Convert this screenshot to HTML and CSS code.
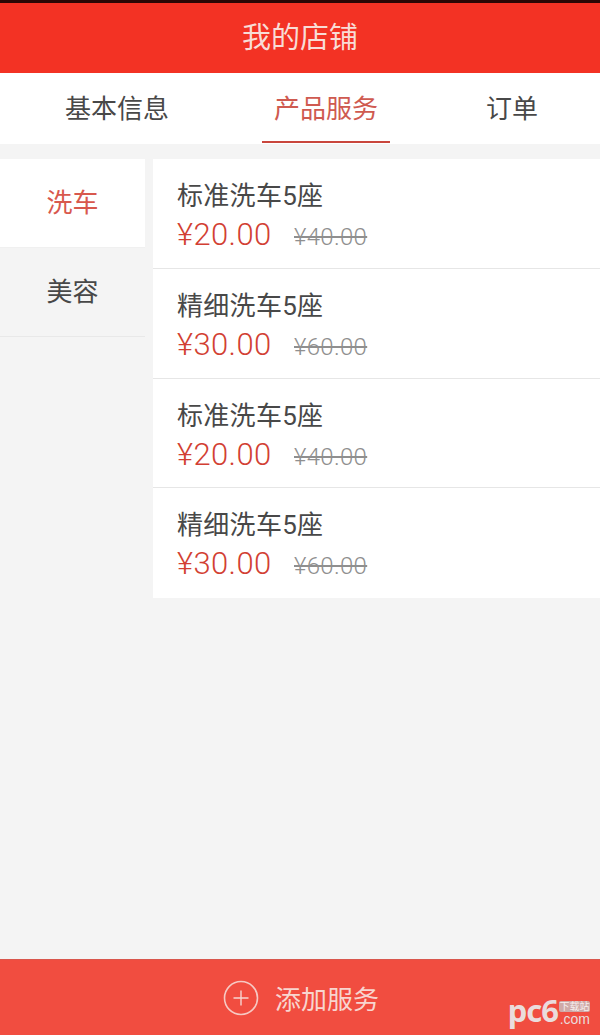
FILE: index.html
```html
<!DOCTYPE html>
<html>
  <head>
    <meta charset="utf-8">
    <link rel="stylesheet" href="styles.css">
  </head>

  <body>
    <div class="statusbar"></div>
    <div class="header">我的店铺</div>

    <div class="tabs">
      <div class="tab tab-info">基本信息</div>
      <div class="tab tab-service active">产品服务</div>
      <div class="tab tab-order">订单</div>
    </div>

    <div class="content">
      <div class="side">
        <div class="side-item active">洗车</div>
        <div class="side-item">美容</div>
      </div>

      <div class="list">
        <div class="item">
          <div class="name">标准洗车5座</div>
          <div class="prices"><span class="price">¥20.00</span><span class="old">¥40.00</span></div>
        </div>
        <div class="item">
          <div class="name">精细洗车5座</div>
          <div class="prices"><span class="price">¥30.00</span><span class="old">¥60.00</span></div>
        </div>
        <div class="item">
          <div class="name">标准洗车5座</div>
          <div class="prices"><span class="price">¥20.00</span><span class="old">¥40.00</span></div>
        </div>
        <div class="item">
          <div class="name">精细洗车5座</div>
          <div class="prices"><span class="price">¥30.00</span><span class="old">¥60.00</span></div>
        </div>
      </div>
    </div>

    <div class="footer">
      <svg class="plus" width="36" height="36" viewBox="0 0 36 36">
        <circle cx="18" cy="18" r="16.5" fill="none" stroke="#f6c9c3" stroke-width="1.6"/>
        <path d="M18 10.5V25.5M10.5 18H25.5" fill="none" stroke="#f6d5d0" stroke-width="1.4"/>
      </svg>
      <span class="add-text">添加服务</span>
      <div class="watermark">
        <span class="wm-logo">pc6</span>
        <span class="wm-side">
          <span class="wm-tag">下载站</span>
          <span class="wm-com">.com</span>
        </span>
      </div>
    </div>
  </body>
</html>
```

FILE: styles.css
```css
* {
  box-sizing: border-box;
}

html, body {
  height: 100%;
}

body {
  margin: 0;
  display: flex;
  flex-direction: column;
  background-color: #f4f4f4;
  font-family: Roboto, "Noto Sans CJK SC", sans-serif;
  color: #484848;
  overflow: hidden;
}

.statusbar {
  height: 3px;
  background-color: #2a0705;
}

.header {
  height: 70px;
  line-height: 71px;
  text-align: center;
  font-size: 29px;
  color: #f8dcd6;
  background-color: #f33224;
}

.tabs {
  height: 71px;
  display: flex;
  background-color: #fff;
  font-size: 26px;
}

.tab {
  height: 70px;
  line-height: 73px;
  text-align: center;
}

.tab-info {
  width: 234px;
}

.tab-service {
  width: 128px;
  margin-left: 28px;
}

.tab-order {
  width: 52px;
  margin-left: 96px;
}

.tab.active {
  color: #cf5a50;
  border-bottom: 2px solid #c9463c;
}

.content {
  flex: 1;
  display: flex;
  align-items: flex-start;
  padding-top: 15px;
}

.side {
  width: 145px;
  margin-right: 8px;
}

.side-item {
  height: 89px;
  line-height: 89px;
  text-align: center;
  font-size: 26px;
  border-bottom: 1px solid #e8e8e8;
}

.side-item.active {
  color: #d8584d;
  background-color: #fff;
  border-bottom-color: #f0f0f0;
}

.list {
  flex: 1;
  background-color: #fff;
}

.item {
  height: 110px;
  padding: 20px 0 0 24px;
  border-bottom: 1px solid #e6e6e6;
}

.item:nth-child(3) {
  height: 109px;
}

.item:last-child {
  height: 110px;
  border-bottom: 0;
}

.name {
  height: 34px;
  line-height: 34px;
  font-size: 26px;
  letter-spacing: 0.3px;
}

.prices {
  display: flex;
  align-items: baseline;
  height: 40px;
  line-height: 42px;
  padding-top: 1px;
}

.price {
  width: 117px;
  font-size: 31px;
  font-weight: 300;
  letter-spacing: 0.4px;
  color: #d23f33;
}

.old {
  font-size: 24px;
  font-weight: 300;
  letter-spacing: 0.3px;
  color: #8f8f8f;
  text-decoration: line-through;
}

.footer {
  height: 76px;
  position: relative;
  display: flex;
  align-items: center;
  padding-left: 223px;
  background-color: #f14d40;
  border-top: 1px solid #d9574d;
}

.plus {
  margin-right: 16px;
}

.add-text {
  font-size: 26px;
  color: #f8d5cf;
}

.watermark {
  position: absolute;
  right: 10px;
  bottom: 9px;
  display: flex;
  align-items: flex-end;
  color: #eadcdc;
}

.wm-logo {
  font-family: "Noto Sans", sans-serif;
  font-size: 31px;
  line-height: 32px;
  font-weight: 700;
  letter-spacing: -1px;
}

.wm-side {
  display: flex;
  flex-direction: column;
  align-items: flex-end;
  margin-left: 1px;
}

.wm-tag {
  width: 31px;
  font-size: 10px;
  line-height: 11px;
  text-align: center;
  color: #f6eeee;
  background-color: #cfaaa8;
  border-radius: 2px;
}

.wm-com {
  font-family: "Liberation Sans", sans-serif;
  font-size: 14px;
  line-height: 14px;
}
```
